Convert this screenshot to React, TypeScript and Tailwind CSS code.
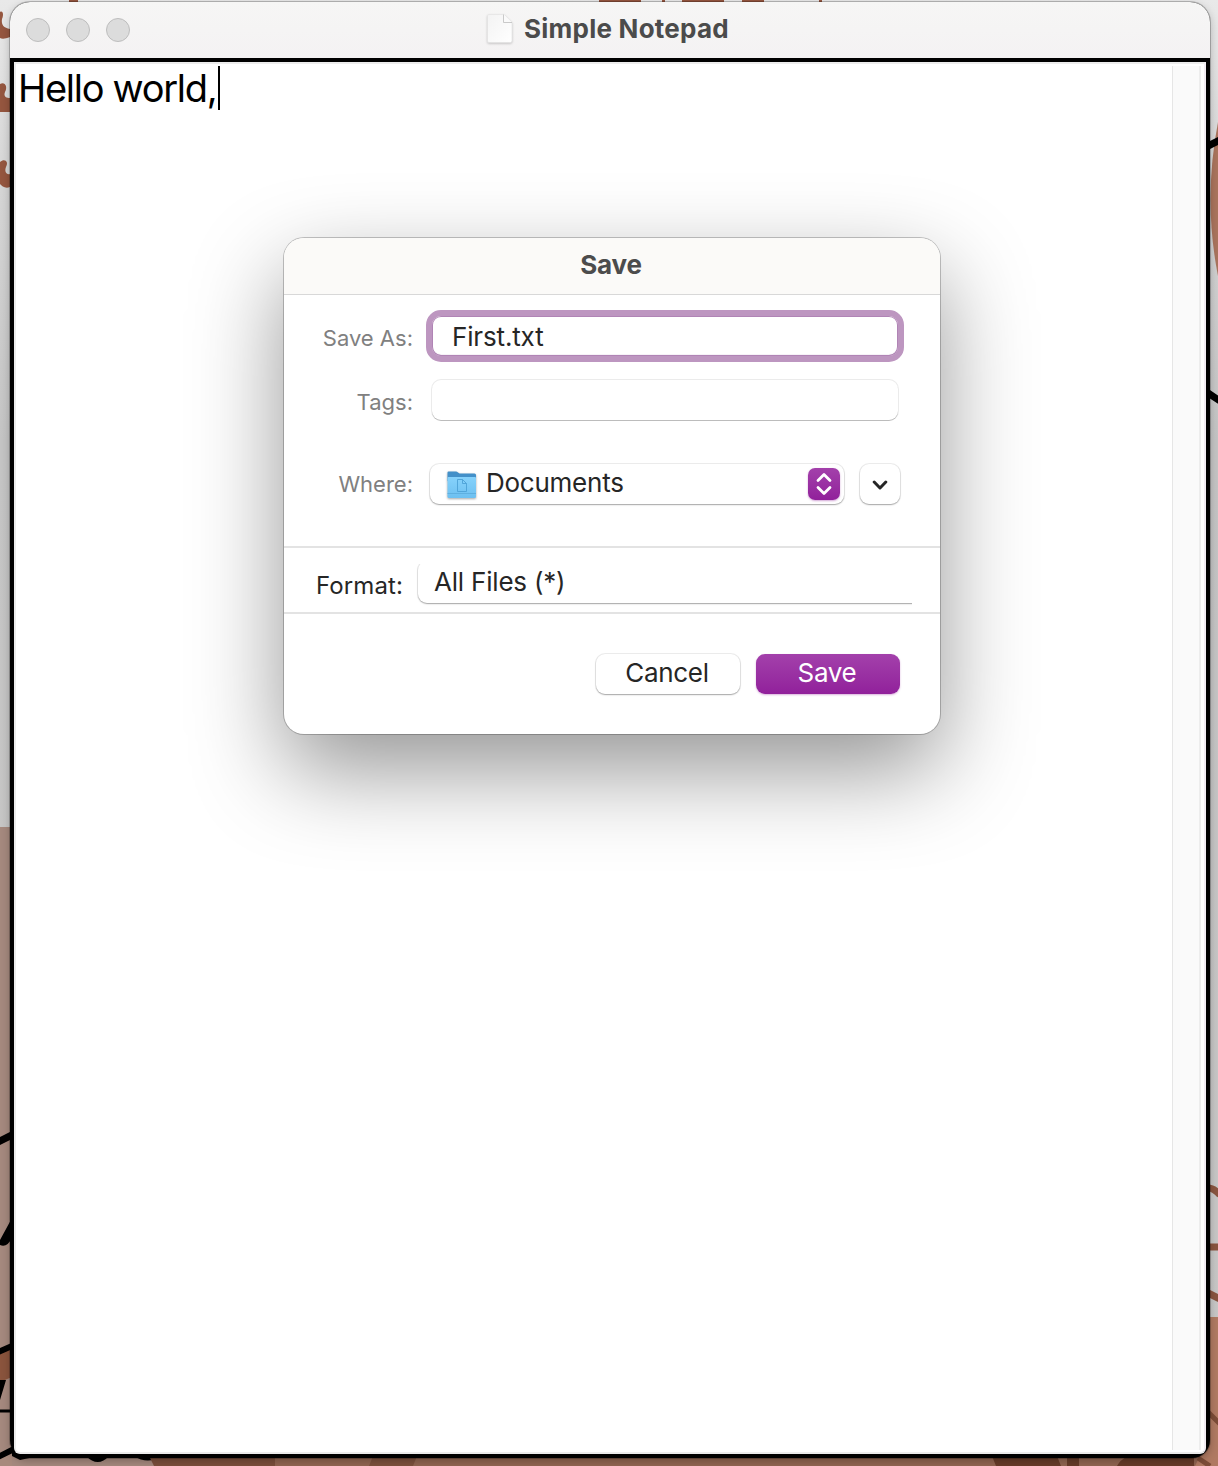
import React from "react";

function Wallpaper() {
  return (
    <svg className="absolute inset-0" width="1218" height="1466" viewBox="0 0 1218 1466" aria-hidden="true">
      <defs>
        <linearGradient id="wall" x1="0" y1="0" x2="0" y2="1">
          <stop offset="0" stopColor="#e9e9e9" />
          <stop offset="0.12" stopColor="#d6d6d6" />
          <stop offset="0.3" stopColor="#c4c4c4" />
          <stop offset="1" stopColor="#c9c8c7" />
        </linearGradient>
      </defs>
      <rect width="1218" height="1466" fill="url(#wall)" />
      <g fill="#95563f">
        <path d="M0 12C3 10 4 15 2 19C1 25 4 28 10 29V37C5 39 2 39 0 38Z" />
        <path d="M0 84C5 81 8 87 5 92C3 97 7 98 10 98V112H0Z" />
        <path d="M0 162C5 158 9 162 6 167C4 172 7 175 10 174V187C5 189 2 186 0 184Z" />
        <path d="M69 0h9v4h-9zM599 0h42v4h-42zM662 0h3v4h-3zM682 0h42v4h-42zM742 0h22v4h-22zM819 0h3v4h-3z" />
      </g>
      <path d="M0 827H12V1440H160V1466H0Z" fill="#a5897e" />
      <path d="M0 1353L12 1348V1377L0 1382Z" fill="#8a543d" />
      <path d="M0 1456L12 1448V1466H0Z" fill="#a88a7d" />
      <g stroke="#000" fill="none">
        <path d="M-2 1142L12 1135" strokeWidth="7" />
        <path d="M-2 1352L12 1346" strokeWidth="6" />
        <path d="M0 1411H11" strokeWidth="3" />
        <path d="M-2 1457L14 1449" strokeWidth="6" />
      </g>
      <path d="M12 1218V1238Q7 1248 0 1245V1240ZM6 1380H0V1400Z" />
      <path d="M12 1448H34V1457L20 1460L12 1456ZM86 1456H109Q98 1468 86 1456ZM134 1456H161Q148 1465 134 1456Z" />
      <path d="M149 1456H275V1466H154Z" fill="#7b4f3c" />
      <path d="M275 1456H1218V1466H275Z" fill="#916551" />
      <path d="M373 1456H417L413 1466H369Z" fill="#7d513d" />
      <path d="M992 1456H1057L1061 1466H996ZM1067 1456H1079V1466H1067ZM1128 1456H1194V1466H1117Q1120 1460 1128 1456Z" fill="#673c29" />
      <path d="M1218 122Q1203 200 1218 276Z" fill="#aa745d" />
      <path d="M1208 146L1220 140M1208 393L1220 401" stroke="#000" strokeWidth="7" />
      <path d="M1208 1317H1218V1466H1195L1208 1440Z" fill="#b07a62" />
      <path d="M1208 1188Q1214 1188 1220 1195M1208 1247H1220M1208 1293L1220 1299" fill="none" stroke="#8a5540" strokeWidth="7" />
      <path d="M1208 1412L1220 1424M1198 1458L1210 1466" stroke="#7d4d38" strokeWidth="5" />
    </svg>
  );
}

function DocumentIcon() {
  return (
    <svg width="28" height="32" viewBox="0 0 28 32" className="drop-shadow-[0_1px_1px_rgba(0,0,0,0.2)]" aria-hidden="true">
      <defs>
        <linearGradient id="paper" x1="0" y1="0" x2="1" y2="1">
          <stop offset="0" stopColor="#f3f3f3" />
          <stop offset="1" stopColor="#ffffff" />
        </linearGradient>
      </defs>
      <path d="M3 1.500H18L26 9.500V27.500Q26 29.500 24.500 29.500H3Q1.500 29.500 1.500 28V3Q1.500 1.500 3 1.500Z" fill="url(#paper)" stroke="#e2e2e2" strokeWidth=".6" />
      <path d="M17.500 1.500V9.500H26Z" fill="#fafafa" />
      <path d="M17.500 1.500V9.500H26" fill="none" stroke="#bdbdbd" strokeWidth=".8" />
    </svg>
  );
}

function FolderIcon() {
  return (
    <svg width="30" height="28" viewBox="0 0 30 28" className="mt-px drop-shadow-[0_1px_1px_rgba(0,0,0,0.35)]" aria-hidden="true">
      <defs>
        <linearGradient id="folder" x1="0" y1="0" x2="0" y2="1">
          <stop offset="0" stopColor="#86d2fb" />
          <stop offset="1" stopColor="#6dc0f1" />
        </linearGradient>
      </defs>
      <path d="M.5 1.500Q.5 .5 1.500 .5H9Q10 .5 11 1.500L12.500 2.500H27.500Q29 2.500 29 4V10H.5Z" fill="#4390c9" />
      <path d="M.5 7Q.5 6 1.500 6H28Q29 6 29 7V25.500Q29 27 27.500 27H2Q.5 27 .5 25.500Z" fill="url(#folder)" />
      <path d="M.5 22.500H29" stroke="#5fb0e0" strokeWidth="1" />
      <path d="M10.500 8.500H15.500L19.500 12.500V20.500H10.500ZM15.500 8.500V12.500H19.500" fill="none" stroke="#4da1d6" strokeWidth=".9" />
    </svg>
  );
}

const control =
  "bg-white rounded-[9px] shadow-[0_0_0_1px_rgba(0,0,0,0.07),0_1px_1.5px_rgba(0,0,0,0.3)]";

function SaveDialog() {
  return (
    <section className="absolute left-[284px] top-[238px] flex h-[496px] w-[656px] flex-col rounded-[20px] bg-white text-[#262626] shadow-[0_0_0_1px_rgba(0,0,0,0.22),0_36px_92px_rgba(0,0,0,0.42)]">
      <header className="flex h-[57px] shrink-0 items-center justify-center rounded-t-[20px] border-b border-[#d8d8d8] bg-[#fbfaf8] pr-[2px] pb-[3px] text-[26px] font-bold tracking-[-0.25px] text-[#4c4c4c]">
        Save
      </header>
      <div className="flex h-[251px] shrink-0 flex-col">
        <div className="mt-[15px] flex h-[52px] items-center">
          <label className="w-[129px] pt-[5px] text-right text-[22px] text-[#808080]">Save As:</label>
          <div className="ml-[13px] flex h-[52px] w-[478px] items-center rounded-[15px] border-[6px] border-[#bd96c0] bg-white pt-px pl-5 text-[26px] tracking-[-0.15px] shadow-[inset_0_0_0_1px_#b084b5,inset_0_-1px_1px_#a57aab]">
            First.txt
          </div>
        </div>
        <div className="mt-[18px] flex h-10 items-center">
          <label className="w-[129px] pt-[5px] text-right text-[22px] text-[#808080]">Tags:</label>
          <div className="ml-[19px] h-10 w-[466px] rounded-[9px] bg-white shadow-[0_0_0_1px_rgba(0,0,0,0.08),0_1px_0_rgba(0,0,0,0.2)]" />
        </div>
        <div className="mt-[44px] flex h-10 items-center">
          <label className="w-[129px] text-right text-[22px] text-[#808080]">Where:</label>
          <button className={control + " ml-[17px] flex h-10 w-[414px] items-center pr-1 pl-[17px] text-left text-[26px] tracking-[-0.25px]"}>
            <FolderIcon />
            <span className="ml-[9px] pb-[3px]">Documents</span>
            <span className="ml-auto flex h-8 w-8 items-center justify-center rounded-[7px] bg-gradient-to-b from-[#a340ab] to-[#91209b] shadow-[0_1px_2px_rgba(145,32,155,0.4)]">
              <svg width="16" height="24" viewBox="0 0 16 24" fill="none" stroke="white" strokeWidth="2.8" strokeLinecap="round" strokeLinejoin="round" aria-hidden="true">
                <path d="M2 8.500L8 2.500L14 8.500M2 15.500L8 21.500L14 15.500" />
              </svg>
            </span>
          </button>
          <button aria-label="Expand" className={control + " ml-4 flex h-10 w-10 items-center justify-center"}>
            <svg width="16" height="10" viewBox="0 0 16 10" fill="none" stroke="#262626" strokeWidth="3" strokeLinecap="round" strokeLinejoin="round" className="mt-px" aria-hidden="true">
              <path d="M2.200 2L8 8L13.800 2" />
            </svg>
          </button>
        </div>
      </div>
      <div className="flex h-[68px] shrink-0 border-y-2 border-[#e3e3e3]">
        <label className="w-[119px] pt-[20px] text-right text-[24px] leading-[36px] tracking-[0.1px]">Format:</label>
        <div className="mt-4 ml-[13px] h-[44px] w-[496px] overflow-hidden pl-[2px]">
          <div className={control + " -mt-[3px] h-[42px] w-[520px] pt-[2px] pl-4 text-[26px] leading-[38px] tracking-[-0.2px]"}>All Files (*)</div>
        </div>
      </div>
      <footer className="flex justify-end gap-4 pt-[40px] pr-10 text-[26px] leading-[38px]">
        <button className={control + " h-10 w-36 pr-[2px] pb-[2px] tracking-[-0.3px]"}>Cancel</button>
        <button className="h-10 w-36 rounded-[9px] bg-gradient-to-b from-[#a340ab] to-[#91209b] pr-[2px] pb-[2px] tracking-[-0.3px] text-white shadow-[0_1px_2px_rgba(145,32,155,0.35)]">Save</button>
      </footer>
    </section>
  );
}

export default function App() {
  return (
    <main className="relative h-[1466px] w-[1218px] overflow-hidden px-2 pt-[2px] font-['Inter',sans-serif]">
      <Wallpaper />
      <div className="relative ml-[2px] flex h-[1456px] w-[1200px] flex-col overflow-hidden rounded-t-[20px] rounded-b-[18px] bg-black shadow-[0_0_0_1px_rgba(0,0,0,0.22),0_3px_8px_rgba(0,0,0,0.25)]">
        <header className="relative flex h-14 shrink-0 items-center justify-center bg-gradient-to-b from-[#f6f6f5] to-[#f4f2f3] pr-[5px] pb-[3px]">
          <div className="absolute top-4 left-4 flex gap-4">
            <i className="size-6 rounded-full border border-[#bdbdbd] bg-[#dcdcdc]" />
            <i className="size-6 rounded-full border border-[#bdbdbd] bg-[#dcdcdc]" />
            <i className="size-6 rounded-full border border-[#bdbdbd] bg-[#dcdcdc]" />
          </div>
          <DocumentIcon />
          <h1 className="ml-[10px] text-[26px] font-bold tracking-[0.24px] text-[#4b4b4b]">Simple Notepad</h1>
        </header>
        <div className="mx-1 mt-1 mb-1 flex flex-1 rounded-b-[6px] border-2 border-[#ececec] border-r-[#f2edf3] bg-white">
          <div className="flex flex-1 items-start pt-[2px] pl-[2px]">
            <span className="-mt-px w-[200px] whitespace-nowrap text-[38px] leading-[46px] tracking-[-1.28px] text-black">Hello world,</span>
            <span className="h-11 w-[2px] bg-black" />
          </div>
          <div className="mt-[2px] mr-[3px] mb-[2px] w-[29px] border-r-2 border-l border-r-[#ededed] border-l-[#e6e6e6] bg-[#fafafa]" />
        </div>
      </div>
      <SaveDialog />
    </main>
  );
}
